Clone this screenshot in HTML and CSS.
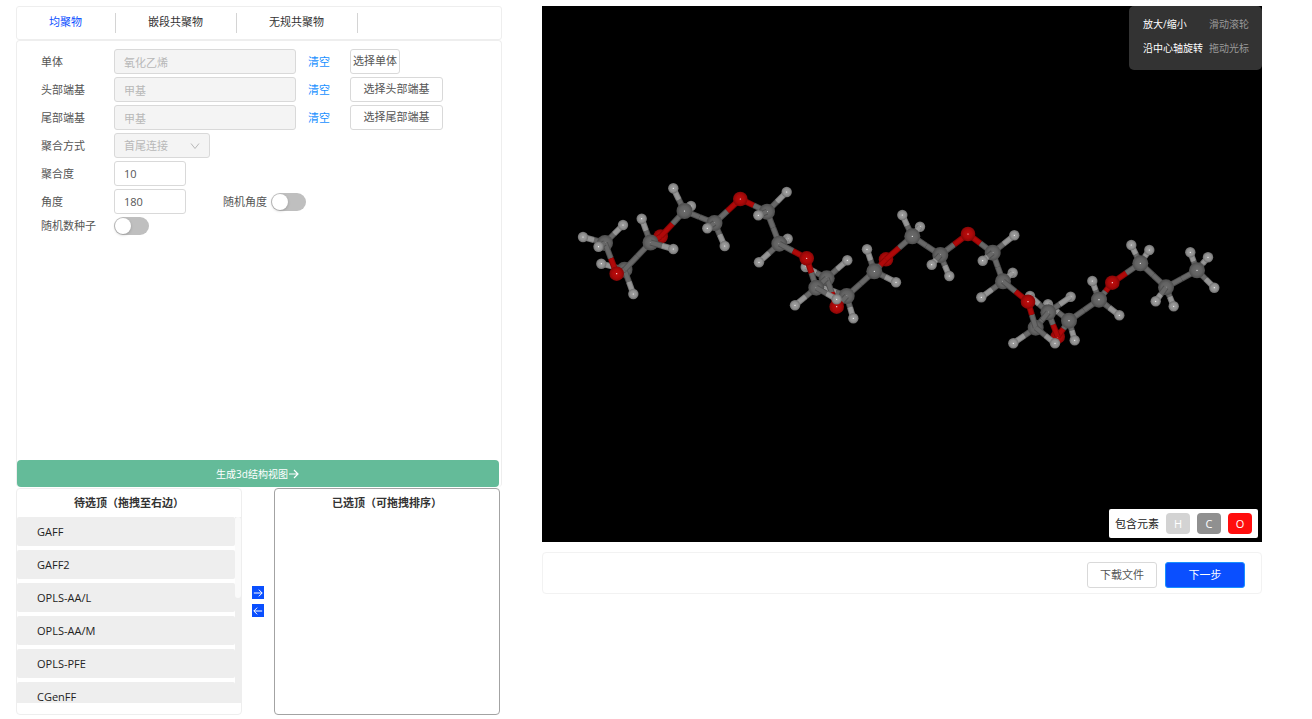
FILE: index.html
```html
<!DOCTYPE html>
<html lang="zh-CN">
<head>
<meta charset="utf-8">
<title>聚合物建模</title>
<link rel="stylesheet" href="styles.css">
</head>
<body>
<main class="page">
  <section class="builder">
    <nav class="tabs">
      <a class="tab tab-active" href="#homo">均聚物</a>
      <a class="tab" href="#block">嵌段共聚物</a>
      <a class="tab" href="#random">无规共聚物</a>
    </nav>
    <form class="card">
      <div class="rows">
        <div class="row">
          <label class="label" for="monomer">单体</label>
          <input class="field field-wide" id="monomer" value="氧化乙烯" disabled>
          <a class="clear" href="#clear-monomer">清空</a>
          <button class="btn btn-tight" type="button">选择单体</button>
        </div>
        <div class="row">
          <label class="label" for="head">头部端基</label>
          <input class="field field-wide" id="head" value="甲基" disabled>
          <a class="clear" href="#clear-head">清空</a>
          <button class="btn btn-pick" type="button">选择头部端基</button>
        </div>
        <div class="row">
          <label class="label" for="tail">尾部端基</label>
          <input class="field field-wide" id="tail" value="甲基" disabled>
          <a class="clear" href="#clear-tail">清空</a>
          <button class="btn btn-pick" type="button">选择尾部端基</button>
        </div>
        <div class="row">
          <label class="label" for="mode">聚合方式</label>
          <div class="select-wrap">
            <select class="field field-select" id="mode" disabled><option>首尾连接</option></select>
            <svg class="chevron" viewBox="0 0 10 10"><path d="M1 2.5 5 7.5 9 2.5"/></svg>
          </div>
        </div>
        <div class="row">
          <label class="label" for="degree">聚合度</label>
          <input class="field field-short" id="degree" value="10">
        </div>
        <div class="row">
          <label class="label" for="angle">角度</label>
          <input class="field field-short" id="angle" value="180">
          <div class="inline-switch">
            <label for="random-angle">随机角度</label>
            <input class="switch" type="checkbox" id="random-angle">
          </div>
        </div>
        <div class="row row-switch">
          <label class="label" for="seed">随机数种子</label>
          <input class="switch" type="checkbox" id="seed">
        </div>
      </div>
      <button class="generate" type="button">生成3d结构视图<svg class="arrow" viewBox="0 0 12 12"><path d="M1 6H10M6 2l4 4-4 4"/></svg></button>
    </form>
    <div class="transfer">
      <section class="pool">
        <h2 class="pool-title">待选顶（拖拽至右边）</h2>
        <div class="pool-body">
          <ul class="items">
            <li class="item">GAFF</li>
            <li class="item">GAFF2</li>
            <li class="item">OPLS-AA/L</li>
            <li class="item">OPLS-AA/M</li>
            <li class="item">OPLS-PFE</li>
            <li class="item">CGenFF</li>
          </ul>
          <div class="track"><div class="thumb"></div></div>
        </div>
      </section>
      <div class="moves">
        <button class="move" type="button" aria-label="右移"><svg class="arrow" viewBox="0 0 12 12"><path d="M1 6H11M7 2l4 4-4 4"/></svg></button>
        <button class="move" type="button" aria-label="左移"><svg class="arrow" viewBox="0 0 12 12"><path d="M11 6H1M5 2 1 6l4 4"/></svg></button>
      </div>
      <section class="pool pool-chosen">
        <h2 class="pool-title">已选顶（可拖拽排序）</h2>
      </section>
    </div>
  </section>

  <section class="preview">
    <div class="viewer">
      <svg class="molecule" id="molecule" viewBox="542 6 720 536">
        <defs>
          <radialGradient id="fill-C"><stop offset="0" stop-color="#6c6c6c"/><stop offset=".6" stop-color="#626262"/><stop offset="1" stop-color="#4c4c4c"/></radialGradient>
          <radialGradient id="fill-O"><stop offset="0" stop-color="#bd0d0d"/><stop offset=".6" stop-color="#ab0909"/><stop offset="1" stop-color="#860606"/></radialGradient>
          <radialGradient id="fill-H"><stop offset="0" stop-color="#a0a0a0"/><stop offset=".6" stop-color="#929292"/><stop offset="1" stop-color="#707070"/></radialGradient>
        </defs>
      </svg>
      <dl class="hints">
        <dt>放大/缩小</dt><dd>滑动滚轮</dd>
        <dt>沿中心轴旋转</dt><dd>拖动光标</dd>
      </dl>
      <div class="legend">
        <span class="legend-label">包含元素</span>
        <span class="chip chip-h">H</span>
        <span class="chip chip-c">C</span>
        <span class="chip chip-o">O</span>
      </div>
    </div>
    <footer class="actions">
      <button class="btn btn-download" type="button">下载文件</button>
      <button class="btn btn-next" type="button">下一步</button>
    </footer>
  </section>
</main>
<script src="molecule.js"></script>
</body>
</html>
```

FILE: styles.css
```css
* { box-sizing: border-box; }

body {
  margin: 0;
  background: #fff;
  color: #555;
  font: 11px/16px "Open Sans", "Noto Sans CJK SC", sans-serif;
}

button, input, select { font: inherit; color: inherit; margin: 0; }
a { text-decoration: none; }

.page {
  display: grid;
  grid-template-columns: 486fr 720fr;
  gap: 40px;
  min-height: 100vh;
  padding: 6px 50px 4px 16px;
}

.builder { display: flex; flex-direction: column; }

.tabs {
  display: flex;
  align-items: center;
  height: 34px;
  border: 1px solid #eee;
  border-radius: 3px;
}
.tab {
  padding: 1px 33px 3px 32px;
  border-right: 1px solid #d4d4d4;
  color: #333;
}
.tab-active { color: #0a4fff; }

.card {
  display: flex;
  flex: 1;
  flex-direction: column;
  justify-content: space-between;
  padding: 8px 2px 0 0;
  border: 1px solid #eee;
  border-bottom: 0;
  border-radius: 4px;
}
.rows { display: flex; flex-direction: column; gap: 3px; padding-left: 24px; }
.row { display: flex; height: 25px; align-items: center; }
.row-switch { height: 18px; }
.label { width: 73px; }

.field {
  height: 25px;
  padding: 0 9px;
  border: 1px solid #d9d9d9;
  border-radius: 3px;
  background: #fff;
}
.field:disabled { background: #f4f4f4; color: #b8b8b8; opacity: 1; }
.field-wide { width: 182px; }
.field-short { width: 72px; }
.field-select { width: 96px; appearance: none; }
.select-wrap { position: relative; display: flex; }
.chevron {
  position: absolute;
  right: 10px;
  top: 8px;
  width: 10px;
  height: 10px;
  fill: none;
  stroke: #b8b8b8;
}
.clear { width: 42px; margin-left: 12px; color: #1890ff; }

.btn {
  height: 25px;
  padding: 0 0 1px;
  border: 1px solid #d9d9d9;
  border-radius: 3px;
  background: #fff;
}
.btn-tight { width: 50px; }
.btn-pick { width: 93px; }

.inline-switch { display: flex; align-items: center; gap: 4px; margin-left: 37px; }
.switch {
  display: flex;
  width: 35px;
  height: 18px;
  padding: 1px;
  border-radius: 9px;
  background: #bfbfbf;
  appearance: none;
}
.switch::before {
  content: "";
  width: 16px;
  height: 16px;
  border-radius: 50%;
  background: #fff;
  box-shadow: 0 1px 3px rgba(0, 0, 0, .2);
}

.generate {
  display: flex;
  align-items: center;
  justify-content: center;
  height: 27px;
  padding: 0;
  border: 0;
  border-radius: 4px;
  background: #64bb99;
  color: #fff;
  font-size: 10px;
}
.arrow { width: 12px; height: 12px; fill: none; stroke: #fff; stroke-width: 1.2; }

.transfer {
  display: grid;
  grid-template-columns: 1fr 12px 1fr;
  grid-template-rows: minmax(0, 1fr);
  gap: 10px;
  height: 227px;
  margin: 1px 2px 0 0;
}
.pool {
  display: flex;
  flex-direction: column;
  min-height: 0;
  padding-bottom: 11px;
  border: 1px solid #eee;
  border-radius: 4px;
}
.pool-chosen { border-color: #a3a3a3; }
.pool-title {
  margin: 0;
  padding: 6px 0;
  color: #333;
  font-size: 11px;
  font-weight: 700;
  text-align: center;
}
.pool-body { display: flex; flex: 1; min-height: 0; }
.items {
  display: flex;
  flex: 1;
  flex-direction: column;
  gap: 4px;
  margin: 0;
  padding: 0;
  overflow: hidden;
  list-style: none;
}
.item {
  flex: none;
  height: 29px;
  padding: 7px 20px;
  border-radius: 2px;
  background: #eee;
  color: #222;
}
.track { width: 6px; background: #eee; }
.thumb { height: 81px; border-radius: 3px; background: #fafafa; }

.moves { display: flex; flex-direction: column; justify-content: center; gap: 5px; }
.move {
  display: flex;
  align-items: center;
  justify-content: center;
  height: 13px;
  padding: 0;
  border: 0;
  background: #0a4fff;
}
.move .arrow { width: 10px; height: 10px; }

.viewer { position: relative; background: #000; }
.molecule { display: block; width: 100%; }
.bond { stroke-width: 6; }
.bond-core { stroke-width: 4; }

.hints {
  position: absolute;
  top: 0;
  right: 0;
  display: grid;
  grid-template-columns: auto auto;
  gap: 8px 6px;
  margin: 0;
  padding: 10px 13px 14px 14px;
  border-radius: 5px;
  background: #333;
  color: #fff;
  font-size: 10px;
}
.hints dt { white-space: nowrap; }
.hints dd { margin: 0; color: #999; }

.legend {
  position: absolute;
  right: 4px;
  bottom: 4px;
  display: flex;
  align-items: center;
  gap: 7px;
  height: 29px;
  padding: 0 6px;
  border-radius: 2px;
  background: #fff;
  color: #222;
}
.chip {
  width: 24px;
  height: 21px;
  border-radius: 4px;
  color: #fff;
  line-height: 21px;
  text-align: center;
}
.chip-h { background: #d3d3d3; }
.chip-c { background: #909090; }
.chip-o { background: #ff0d0d; }

.actions {
  display: flex;
  align-items: center;
  justify-content: flex-end;
  gap: 8px;
  height: 42px;
  margin-top: 10px;
  padding: 4px 16px 0;
  border: 1px solid #f2f2f2;
  border-radius: 4px;
}
.actions .btn { height: 26px; }
.btn-download { width: 70px; }
.actions .btn-next { width: 80px; border-color: #1890ff; background: #0a4fff; color: #fff; }
```

FILE: molecule.js
```js
// Backbone atoms in chain order: element, x, y, depth, attached hydrogens [x, y, depth].
const chain = [
  ["C", 605, 243, 0, [[583, 237, 0], [623, 225, 0], [598.5, 246.7, 2]]],
  ["O", 616.7, 273.7, 1, []],
  ["C", 624.5, 269.7, -1, [[601.3, 263.7, -1], [633.3, 294, 0]]],
  ["C", 650.5, 242.5, 0, [[641.7, 218.7, 0], [673.3, 249, 1]]],
  ["O", 660.7, 236.5, -1, []],
  ["C", 684.5, 211, 0, [[673.3, 188.3, 0], [691, 206, -2]]],
  ["C", 714.5, 223, 0, [[707.3, 228.3, 2], [724.7, 246, 0]]],
  ["O", 740.3, 199, 0, []],
  ["C", 767, 211.7, 0, [[786.7, 192, 0], [758.3, 215.3, 2]]],
  ["C", 779.3, 243.7, 0, [[787.7, 238.7, -2], [759, 262.3, 0]]],
  ["O", 806.7, 258.3, 2, []],
  ["C", 816.3, 287.7, 2, [[795, 305.3, 2], [836.7, 299.3, 3]]],
  ["C", 826.7, 278.3, 0, [[847.3, 260.3, 0], [805.7, 267, -1]]],
  ["O", 836.7, 306.7, 0.5, []],
  ["C", 846.7, 296, 0, [[853.3, 318.3, 0], [825.3, 288.3, -2]]],
  ["C", 874.3, 271.3, 0, [[867, 249.3, 0], [896, 282.3, 0]]],
  ["O", 886, 259.3, -1, []],
  ["C", 912.3, 236.3, 0, [[902.3, 215, 0], [920, 226.7, -2]]],
  ["C", 940.3, 255, 0, [[931.7, 264.7, 2], [949.3, 276, 0]]],
  ["O", 968, 234, 0, []],
  ["C", 992.7, 252.7, 0, [[1014.3, 235.3, 0], [982.7, 260.7, 2]]],
  ["C", 1003, 281.3, 0, [[1012.7, 272.7, -2], [981.3, 297.3, 0]]],
  ["O", 1028, 301.7, 2, []],
  ["C", 1035.7, 327.7, 1, [[1013.3, 343.3, 1], [1055, 343.3, 3]]],
  ["C", 1048.3, 312.3, 0.5, [[1070.7, 296.7, 0], [1030, 296, -2]]],
  ["O", 1057.7, 336.7, -0.5, []],
  ["C", 1069, 320.7, 0, [[1074.7, 340.3, 0], [1048, 304.3, -2]]],
  ["C", 1099, 299.7, 0, [[1092.3, 281, 0], [1119.3, 315.3, 0]]],
  ["O", 1112.3, 282.7, 0, []],
  ["C", 1140.3, 263.3, 0, [[1131.3, 245, 0], [1149.3, 250, 0]]],
  ["C", 1166, 287.3, 0, [[1155.7, 301.3, 1], [1173.7, 306.3, 0]]],
  ["C", 1197, 270.3, 0, [[1190.3, 252.3, 0], [1208, 257.3, 0], [1214.3, 287.7, 0]]]
];

const radius = { C: 8, O: 7.3, H: 5.2 };
const bondEdge = { C: "#505050", O: "#8c0606", H: "#7a7a7a" };
const bondCore = { C: "#686868", O: "#b00909", H: "#969696" };
const shapes = [];

function addAtom(atom) {
  const [el, x, y, z] = atom;
  shapes.push({
    z,
    svg: `<circle cx="${x}" cy="${y}" r="${radius[el]}" fill="url(#fill-${el})"/>` +
      `<circle cx="${x}" cy="${y}" r="0.6" fill="#fff"/>`
  });
}

function addHalfBond(from, to) {
  const [el, x, y, z] = from;
  const mx = (x + to[1]) / 2;
  const my = (y + to[2]) / 2;
  const line = `x1="${x}" y1="${y}" x2="${mx}" y2="${my}"`;
  shapes.push({
    z: z * 0.75 + to[3] * 0.25 - 0.1,
    svg: `<line class="bond" ${line} stroke="${bondEdge[el]}"/>` +
      `<line class="bond-core" ${line} stroke="${bondCore[el]}"/>`
  });
}

function connect(a, b) {
  addHalfBond(a, b);
  addHalfBond(b, a);
}

chain.forEach((atom, i) => {
  addAtom(atom);
  if (i > 0) connect(chain[i - 1], atom);
  for (const [x, y, z] of atom[4]) {
    const hydrogen = ["H", x, y, z];
    addAtom(hydrogen);
    connect(atom, hydrogen);
  }
});

shapes.sort((a, b) => a.z - b.z);
document.getElementById("molecule")
  .insertAdjacentHTML("beforeend", shapes.map(s => s.svg).join(""));
```
